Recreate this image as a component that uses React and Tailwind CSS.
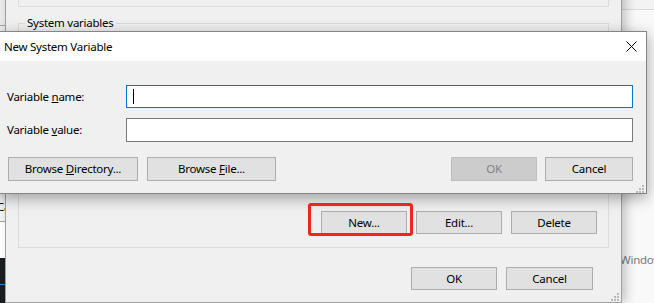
import React from 'react';

function Btn({ children, className = '', disabled = false }) {
    return (
        <button
            disabled={disabled}
            className={`h-full flex items-center justify-center border leading-none ${
                disabled
                    ? 'bg-[#cccccc] border-[#bfbfbf] text-[#838383]'
                    : 'bg-[#e1e1e1] border-[#adadad] text-black'
            } ${className}`}
        >
            {children}
        </button>
    );
}

function Grip({ className = '' }) {
    // little dotted resize handle in the corner
    const dots = [[6, 0], [3, 3], [6, 3], [0, 6], [3, 6], [6, 6]];
    return (
        <svg width="8" height="8" viewBox="0 0 8 8" className={className}>
            {dots.map(([x, y]) => (
                <rect key={`${x}-${y}`} x={x} y={y} width="2" height="2" fill="#b9b9b9" />
            ))}
        </svg>
    );
}

export default function App() {
    return (
        <div className="relative w-[654px] h-[303px] overflow-hidden bg-white font-['Noto_Sans','Segoe_UI',sans-serif] text-[11.5px] tracking-[-0.25px] text-black">
            {/* Desktop bits peeking out on the left */}
            <div className="absolute left-0 top-0 w-[5px] h-full flex flex-col">
                <div className="h-[25px] bg-[#ececec]" />
                <div className="h-px bg-[#a8a8a8]" />
                <div className="h-[171px] bg-[#f0f0f0]" />
                <div className="h-[24px] bg-[#f4f4f4] overflow-hidden leading-[20px] whitespace-nowrap">
                    <span className="ml-[-3px]">Ca</span>
                </div>
                <div className="h-px bg-[#a8a8a8]" />
                <div className="h-[36px] bg-white" />
                <div className="flex-1 bg-[#1b1d21] flex flex-col">
                    <div className="h-[26px]" />
                    <div className="h-px bg-[#3d7cc9]" />
                </div>
            </div>

            {/* Desktop bits on the right */}
            <div className="absolute left-[600px] top-0 w-[54px] h-full bg-[#f9f9f9] flex flex-col">
                <div className="h-[9px] bg-[#f3f3f3]" />
                <div className="h-px bg-[#dadada]" />
                <div className="h-[244px]" />
                <div className="pl-[20px] leading-none text-[#7a7a7a] whitespace-nowrap">Windows</div>
            </div>

            {/* Environment Variables window behind */}
            <div className="absolute left-[5px] top-[-40px] w-[617px] h-[343px] bg-[#f0f0f0] border border-[#a0a0a0] shadow-[4px_0_10px_rgba(0,0,0,0.22)] px-[12px] flex flex-col">
                <div className="h-[46px] border border-[#dcdcdc]" />
                <div className="relative mt-[16px] h-[225px] border border-[#dcdcdc] flex flex-col justify-end items-end pr-[11px] pb-[13px]">
                    <span className="absolute left-[6px] top-[-9px] px-[2px] bg-[#f0f0f0] leading-[16px]">System variables</span>
                    <div className="h-[23px] flex gap-[9px]">
                        <Btn className="w-[86px]">New...</Btn>
                        <Btn className="w-[86px]">Edit...</Btn>
                        <Btn className="w-[86px]">Delete</Btn>
                    </div>
                </div>
                <div className="mt-[19px] h-[23px] flex justify-end gap-[9px] pr-[16px]">
                    <Btn className="w-[86px]">OK</Btn>
                    <Btn className="w-[87px]">Cancel</Btn>
                </div>
                <Grip className="absolute right-[2px] bottom-[1px]" />
            </div>

            {/* New System Variable dialog */}
            <div className="absolute left-[-1px] top-[31px] w-[648px] h-[163px] border border-[#858585] bg-[#f0f0f0] shadow-[0_4px_14px_rgba(0,0,0,0.35)] flex flex-col">
                <div className="h-[29px] bg-white flex items-center justify-between pl-[4px] pr-[9px]">
                    <span className="leading-none">New System Variable</span>
                    <svg width="11" height="11" viewBox="0 0 11 11">
                        <path d="M0.5 0.5 L10.5 10.5 M10.5 0.5 L0.5 10.5" stroke="#000" strokeWidth="1" fill="none" />
                    </svg>
                </div>
                <div className="relative flex-1 flex flex-col pl-[7px] pr-[13px] pt-[24px]">
                    <div className="h-[23px] flex items-center">
                        <label className="w-[119px] leading-none">
                            Variable <u>n</u>ame:
                        </label>
                        <div className="relative flex-1 h-full bg-white border border-[#0078d7]">
                            <div className="absolute left-[6px] top-[3px] w-px h-[15px] bg-black" />
                        </div>
                    </div>
                    <div className="mt-[10px] h-[24px] flex items-center">
                        <label className="w-[119px] leading-none">
                            Variable <u>v</u>alue:
                        </label>
                        <div className="flex-1 h-full bg-white border border-[#7a7a7a]" />
                    </div>
                    <div className="mt-[15px] h-[24px] flex">
                        <Btn className="ml-px w-[130px]">
                            <span>Browse <u>D</u>irectory...</span>
                        </Btn>
                        <Btn className="ml-[9px] w-[129px]">
                            <span>Browse <u>F</u>ile...</span>
                        </Btn>
                        <div className="flex-1" />
                        <Btn disabled className="w-[86px]">OK</Btn>
                        <Btn className="ml-[8px] w-[88px]">Cancel</Btn>
                    </div>
                    <Grip className="absolute right-[2px] bottom-[0px]" />
                </div>
            </div>

            {/* Red highlight around New... */}
            <div className="absolute left-[308px] top-[203px] w-[105px] h-[33px] border-[3px] border-[#f0261d] rounded-[3px]" />
        </div>
    );
}
